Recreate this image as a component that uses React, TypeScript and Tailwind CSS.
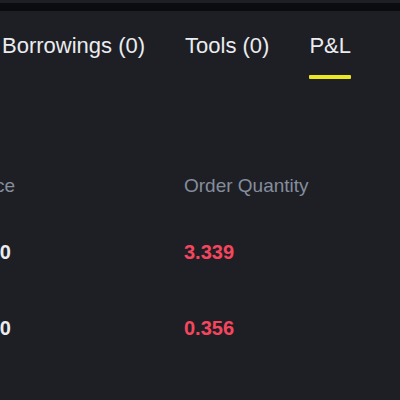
import React from "react";

export default function App() {
  const rows = [
    { price: "0.00", qty: "3.339" },
    { price: "0.00", qty: "0.356" },
  ];
  return (
    <div
      className="w-[400px] h-[400px] overflow-hidden bg-[#1e1f25] flex flex-col"
      style={{ fontFamily: '"Liberation Sans", Arial, sans-serif' }}
    >
      <div className="h-[3px] bg-[#1e1f25]" />
      <div className="h-[8px] bg-[#0b0c0f]" />
      <div className="flex ml-[2px] pt-[24px] gap-[40px] text-[22px] leading-[22px] text-[#eaecef] whitespace-nowrap">
        <div className="flex flex-col">
          <span>Borrowings (0)</span>
        </div>
        <div className="flex flex-col">
          <span>Tools (0)</span>
        </div>
        <div className="flex flex-col items-stretch">
          <span>P&amp;L</span>
          <div className="mt-[18px] h-[4px] bg-[#ebe81f] rounded-[1px]" />
        </div>
      </div>
      <div className="flex mt-[97px] text-[19px] leading-[19px] text-[#848e9c] whitespace-nowrap">
        <div className="w-[184px] flex">
          <div className="w-[15px] flex justify-end">
            <span>Price</span>
          </div>
        </div>
        <span>Order Quantity</span>
      </div>
      <div className="flex flex-col mt-[47px] gap-[56px] text-[20px] leading-[20px] font-bold whitespace-nowrap">
        {rows.map((r, i) => (
          <div key={i} className="flex">
            <div className="w-[184px] flex">
              <div className="w-[11px] flex justify-end text-[#eaecef]">
                <span>{r.price}</span>
              </div>
            </div>
            <span className="text-[#f6465d]">{r.qty}</span>
          </div>
        ))}
      </div>
    </div>
  );
}
